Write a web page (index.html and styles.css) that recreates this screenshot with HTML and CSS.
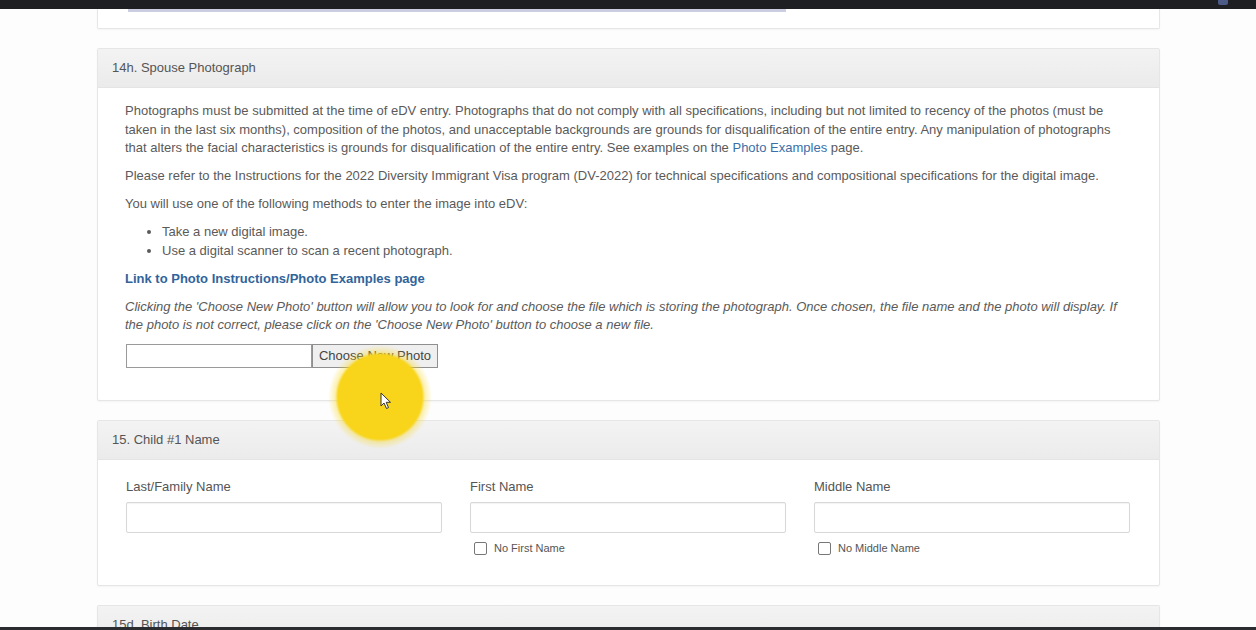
FILE: index.html
```html
<!DOCTYPE html>
<html>
<head>
<meta charset="utf-8">
<link rel="stylesheet" href="styles.css">
</head>
<body>
<div class="topbar"><span class="topicon"></span></div>
<main class="page">
  <section class="panel panel-prev">
    <div class="prev-body"><div class="prev-input"></div></div>
  </section>

  <section class="panel">
    <div class="panel-heading">14h. Spouse Photograph</div>
    <div class="panel-body body-photo">
      <p>Photographs must be submitted at the time of eDV entry. Photographs that do not comply with all specifications, including but not limited to recency of the photos (must be taken in the last six months), composition of the photos, and unacceptable backgrounds are grounds for disqualification of the entire entry. Any manipulation of photographs that alters the facial characteristics is grounds for disqualification of the entire entry. See examples on the <a class="lnk" href="#">Photo Examples</a> page.</p>
      <p>Please refer to the Instructions for the 2022 Diversity Immigrant Visa program (DV-2022) for technical specifications and compositional specifications for the digital image.</p>
      <p>You will use one of the following methods to enter the image into eDV:</p>
      <ul>
        <li>Take a new digital image.</li>
        <li>Use a digital scanner to scan a recent photograph.</li>
      </ul>
      <p><a class="lnk strong" href="#">Link to Photo Instructions/Photo Examples page</a></p>
      <p class="note">Clicking the 'Choose New Photo' button will allow you to look for and choose the file which is storing the photograph. Once chosen, the file name and the photo will display. If the photo is not correct, please click on the 'Choose New Photo' button to choose a new file.</p>
      <div class="file-row">
        <span class="file-name"></span><span class="file-btn">Choose New Photo</span>
      </div>
    </div>
  </section>

  <section class="panel">
    <div class="panel-heading">15. Child #1 Name</div>
    <div class="panel-body name-grid">
      <div class="field">
        <label class="lbl">Last/Family Name</label>
        <div class="inp"></div>
      </div>
      <div class="field">
        <label class="lbl">First Name</label>
        <div class="inp"></div>
        <div class="chk"><span class="box"></span>No First Name</div>
      </div>
      <div class="field">
        <label class="lbl">Middle Name</label>
        <div class="inp"></div>
        <div class="chk"><span class="box"></span>No Middle Name</div>
      </div>
    </div>
  </section>

  <section class="panel panel-last">
    <div class="panel-heading">15d. Birth Date</div>
  </section>
</main>
<div class="bottombar"></div>
<div class="spot"><svg class="cursor" width="12" height="18" viewBox="0 0 12 18"><path d="M1 1 L1 14 L4 11 L6.5 16.5 L8.5 15.6 L6.2 10.3 L10.5 10.3 Z" fill="#fff" stroke="#333" stroke-width="1"/></svg></div>
</body>
</html>
```

FILE: styles.css
```css
html, body {
  margin: 0;
  padding: 0;
  background: #fdfdfd;
  height: 630px;
  overflow: hidden;
  font-family: "Liberation Sans", Arial, sans-serif;
  color: #5a5a5a;
}

.topbar {
  height: 9px;
  background: #1d1f23;
  position: relative;
}
.topicon {
  position: absolute;
  right: 28px;
  top: 0;
  width: 10px;
  height: 5px;
  background: #4b5a86;
  border-radius: 0 0 2px 2px;
}

.page {
  width: 1063px;
  margin: 0 auto;
  padding-left: 1px;
}

.panel {
  background: #fff;
  border: 1px solid #e6e6e6;
  border-radius: 2px;
  box-shadow: 0 1px 2px rgba(0,0,0,0.04);
  margin-bottom: 19px;
}

.panel-prev {
  border-top: none;
  height: 19px;
  border-radius: 0 0 2px 2px;
}
.prev-body {
  padding: 0 0 0 30px;
}
.prev-input {
  width: 658px;
  height: 3px;
  background: #cbcde0;
}

.panel-heading {
  height: 38px;
  line-height: 38px;
  padding: 0 14px;
  font-size: 13px;
  color: #555;
  background: linear-gradient(#f3f3f3, #ebebeb);
  border-bottom: 1px solid #e4e4e4;
}

.panel-body {
  padding: 14px 28px 0 27px;
}

.body-photo {
  font-size: 13px;
  line-height: 18.5px;
  padding-bottom: 32px;
}
.body-photo p {
  margin: 0 0 9.5px 0;
}
.body-photo ul {
  margin: 0 0 9.5px 0;
  padding-left: 37px;
}
.lnk {
  color: #3a6fa8;
  text-decoration: none;
}
.lnk.strong {
  font-weight: bold;
  color: #31649b;
}
.note {
  font-style: italic;
}

.file-row {
  display: flex;
  margin-top: 9px;
  margin-left: 1px;
  height: 24px;
}
.file-name {
  width: 184px;
  height: 22px;
  border: 1px solid #9a9a9a;
  background: #fff;
}
.file-btn {
  width: 124px;
  height: 22px;
  border: 1px solid #8f8f8f;
  background: #efefef;
  font-size: 13px;
  line-height: 22px;
  text-align: center;
  color: #444;
}

.name-grid {
  display: grid;
  grid-template-columns: 316px 316px 316px;
  column-gap: 28px;
  padding: 19px 30px 0 28px;
  height: 106px;
}
.lbl {
  display: block;
  font-size: 13px;
  line-height: 16px;
  margin-bottom: 7px;
  color: #555;
}
.inp {
  height: 29px;
  border: 1px solid #d8d8d8;
  border-radius: 2px;
  box-shadow: inset 0 1px 1px rgba(0,0,0,0.05);
  background: #fff;
}
.chk {
  display: flex;
  align-items: center;
  margin-top: 8px;
  padding-left: 4px;
  font-size: 11px;
  color: #555;
  height: 14px;
}
.box {
  width: 11px;
  height: 11px;
  border: 1px solid #777;
  border-radius: 2px;
  margin-right: 7px;
  background: #fff;
}

.panel-last {
  height: 40px;
  border-bottom: none;
}

.bottombar {
  position: fixed;
  left: 0;
  right: 0;
  bottom: 0;
  height: 3px;
  background: #2a2c30;
}

.spot {
  position: absolute;
  left: 325px;
  top: 342px;
  width: 110px;
  height: 110px;
  border-radius: 50%;
  background: radial-gradient(circle, #f8d51a 0, #f8d51a 42px, rgba(248,213,26,0.35) 45px, rgba(248,213,26,0) 52px);
}
.cursor {
  position: absolute;
  left: 55px;
  top: 50px;
}
```
